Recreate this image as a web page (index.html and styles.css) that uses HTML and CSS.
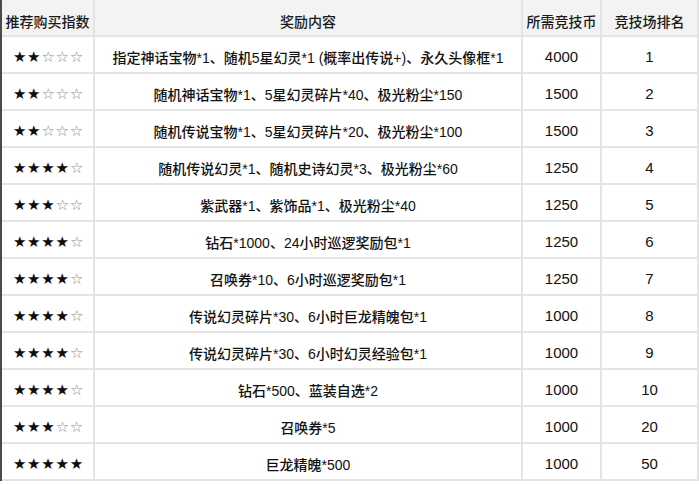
FILE: index.html
```html
<!DOCTYPE html>
<html lang="zh">
<head>
<meta charset="utf-8">
<title>竞技场兑换</title>
<link rel="stylesheet" href="styles.css">
</head>
<body>
<div class="table">
  <div class="cell head">推荐购买指数</div>
  <div class="cell head">奖励内容</div>
  <div class="cell head">所需竞技币</div>
  <div class="cell head">竞技场排名</div>

  <div class="cell stars"><b>★★</b><i>☆☆☆</i></div>
  <div class="cell">指定神话宝物*1、随机5星幻灵*1 (概率出传说+)、永久头像框*1</div>
  <div class="cell num">4000</div>
  <div class="cell num">1</div>

  <div class="cell stars"><b>★★</b><i>☆☆☆</i></div>
  <div class="cell">随机神话宝物*1、5星幻灵碎片*40、极光粉尘*150</div>
  <div class="cell num">1500</div>
  <div class="cell num">2</div>

  <div class="cell stars"><b>★★</b><i>☆☆☆</i></div>
  <div class="cell">随机传说宝物*1、5星幻灵碎片*20、极光粉尘*100</div>
  <div class="cell num">1500</div>
  <div class="cell num">3</div>

  <div class="cell stars"><b>★★★★</b><i>☆</i></div>
  <div class="cell">随机传说幻灵*1、随机史诗幻灵*3、极光粉尘*60</div>
  <div class="cell num">1250</div>
  <div class="cell num">4</div>

  <div class="cell stars"><b>★★★</b><i>☆☆</i></div>
  <div class="cell">紫武器*1、紫饰品*1、极光粉尘*40</div>
  <div class="cell num">1250</div>
  <div class="cell num">5</div>

  <div class="cell stars"><b>★★★★</b><i>☆</i></div>
  <div class="cell">钻石*1000、24小时巡逻奖励包*1</div>
  <div class="cell num">1250</div>
  <div class="cell num">6</div>

  <div class="cell stars"><b>★★★★</b><i>☆</i></div>
  <div class="cell">召唤券*10、6小时巡逻奖励包*1</div>
  <div class="cell num">1250</div>
  <div class="cell num">7</div>

  <div class="cell stars"><b>★★★★</b><i>☆</i></div>
  <div class="cell">传说幻灵碎片*30、6小时巨龙精魄包*1</div>
  <div class="cell num">1000</div>
  <div class="cell num">8</div>

  <div class="cell stars"><b>★★★★</b><i>☆</i></div>
  <div class="cell">传说幻灵碎片*30、6小时幻灵经验包*1</div>
  <div class="cell num">1000</div>
  <div class="cell num">9</div>

  <div class="cell stars"><b>★★★★</b><i>☆</i></div>
  <div class="cell">钻石*500、蓝装自选*2</div>
  <div class="cell num">1000</div>
  <div class="cell num">10</div>

  <div class="cell stars"><b>★★★</b><i>☆☆</i></div>
  <div class="cell">召唤券*5</div>
  <div class="cell num">1000</div>
  <div class="cell num">20</div>

  <div class="cell stars"><b>★★★★★</b></div>
  <div class="cell">巨龙精魄*500</div>
  <div class="cell num">1000</div>
  <div class="cell num">50</div>
</div>
</body>
</html>
```

FILE: styles.css
```css
html, body {
  margin: 0;
  padding: 0;
  background: #ffffff;
}

body {
  font-family: "Liberation Sans", "Noto Sans CJK SC", sans-serif;
  font-size: 14px;
  font-weight: 500;
  color: #111111;
  width: 699px;
  height: 484px;
  overflow: hidden;
}

.table {
  display: grid;
  grid-template-columns: 93px 428px 79px 97px;
  grid-auto-rows: 37px;
  border-left: 2px solid #4a4a4a;
}

.cell {
  box-sizing: border-box;
  display: flex;
  align-items: center;
  justify-content: center;
  padding-top: 4px;
  border-right: 2px solid #e4e4e4;
  border-bottom: 2px solid #e4e4e4;
  white-space: nowrap;
  overflow: hidden;
}

.head {
  background: #f3f3f3;
  color: #1a1a1a;
  padding-top: 6px;
}

.num {
  font-size: 15px;
}

.stars {
  font-family: "DejaVu Sans", sans-serif;
  font-size: 15px;
  letter-spacing: 0.8px;
  padding-left: 2px;
}

.stars b {
  font-weight: normal;
  color: #0d0d0d;
}

.stars i {
  font-style: normal;
  color: #8a8a8a;
}
```
